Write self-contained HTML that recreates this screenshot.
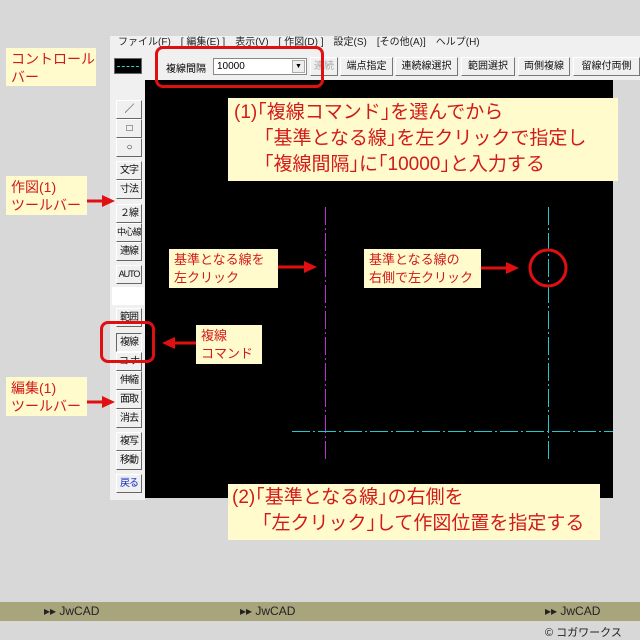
<!DOCTYPE html><html><head><meta charset="utf-8"><style>
*{margin:0;padding:0;box-sizing:border-box}
body{width:640px;height:640px;background:#d8d8d8;position:relative;overflow:hidden;font-family:"Liberation Sans","Noto Sans CJK JP",sans-serif}
.a{position:absolute}
.menu{left:110px;top:36px;width:530px;height:14px;background:#f0f0f0;font-size:10px;color:#222;line-height:14px;padding-left:8px;white-space:nowrap}
.ctl{left:110px;top:50px;width:530px;height:30px;background:#f0f0f0}
.btn{position:absolute;top:57px;height:19px;background:#f0f0f0;border:1px solid #fff;border-right-color:#777;border-bottom-color:#777;font-size:10px;line-height:17px;text-align:center;color:#111;white-space:nowrap;overflow:hidden}
.tb{position:absolute;left:116px;width:26px;height:19px;background:#f0f0f0;border:1px solid #fff;border-right-color:#666;border-bottom-color:#666;font-size:10px;line-height:17px;text-align:center;color:#111;white-space:nowrap;overflow:hidden;letter-spacing:-1px}
.note{position:absolute;background:#fffbcc;color:#d21a1a;white-space:nowrap}
.red{position:absolute;border:3px solid #e01010;border-radius:8px}
.big{font-size:19px;line-height:26px}
.ind{display:block;margin-left:30px}
.v{position:absolute;width:1px}
</style></head><body>
<div class="a menu">ファイル(F)　[ 編集(E) ]　表示(V)　[ 作図(D) ]　設定(S)　[その他(A)]　ヘルプ(H)</div>
<div class="a ctl"></div>
<div class="a" style="left:114px;top:58px;width:28px;height:16px;background:#000;border:1px solid #666"><div style="position:absolute;left:2px;right:2px;top:7px;border-top:1px dashed #3cc"></div></div>
<div class="a" style="left:166px;top:60px;font-size:10px">複線間隔</div>
<div class="a" style="left:213px;top:58px;width:94px;height:17px;background:#fff;border:1px solid #888;font-size:10px;line-height:15px;padding-left:3px">10000<span style="position:absolute;right:1px;top:1px;width:13px;height:13px;background:#eee;border:1px solid #aaa;font-size:7px;line-height:12px;text-align:center">▼</span></div>
<div class="btn" style="left:310px;width:28px;color:#aaa">連続</div>
<div class="btn" style="left:340px;width:53px">端点指定</div>
<div class="btn" style="left:395px;width:63px">連続線選択</div>
<div class="btn" style="left:461px;width:54px">範囲選択</div>
<div class="btn" style="left:518px;width:52px">両側複線</div>
<div class="btn" style="left:573px;width:67px">留線付両側</div>
<div class="a" style="left:110px;top:80px;width:35px;height:420px;background:#f0f0f0"></div>
<div class="a" style="left:145px;top:80px;width:468px;height:418px;background:#000"></div>
<div class="a" style="left:112px;top:287px;width:32px;height:18px;background:#fff"></div>
<div class="tb" style="top:100px">／</div><div class="tb" style="top:119px">□</div><div class="tb" style="top:138px">○</div>
<div class="tb" style="top:161px">文字</div><div class="tb" style="top:180px">寸法</div>
<div class="tb" style="top:204px">２線</div><div class="tb" style="top:223px;font-size:9px">中心線</div><div class="tb" style="top:242px">連線</div>
<div class="tb" style="top:265px;font-size:9px">AUTO</div>
<div class="tb" style="top:308px">範囲</div><div class="tb" style="top:333px;border-color:#666 #fff #fff #666">複線</div><div class="tb" style="top:352px">コ-ナ</div>
<div class="tb" style="top:371px">伸縮</div><div class="tb" style="top:390px">面取</div><div class="tb" style="top:409px">消去</div>
<div class="tb" style="top:432px">複写</div><div class="tb" style="top:451px">移動</div>
<div class="tb" style="top:474px;color:#1030c0">戻る</div>
<div class="v" style="left:325px;top:207px;height:255px;background:repeating-linear-gradient(to bottom,#c030d0 0 18px,transparent 18px 21px,#c030d0 21px 23px,transparent 23px 26px)"></div>
<div class="v" style="left:548px;top:207px;height:255px;background:repeating-linear-gradient(to bottom,#20c8d0 0 18px,transparent 18px 21px,#20c8d0 21px 23px,transparent 23px 26px)"></div>
<div class="a" style="left:292px;top:431px;width:321px;height:1px;background:repeating-linear-gradient(to right,#20c8d0 0 18px,transparent 18px 21px,#20c8d0 21px 23px,transparent 23px 26px)"></div>
<svg class="a" style="left:0;top:0" width="640" height="640">
<circle cx="548" cy="268" r="18" fill="none" stroke="#e01010" stroke-width="3"/>
<g stroke="#e01010" stroke-width="3" fill="#e01010">
<line x1="278" y1="267" x2="306" y2="267"/><polygon points="304,261 317,267 304,273" stroke="none"/>
<line x1="481" y1="268" x2="508" y2="268"/><polygon points="506,262 519,268 506,274" stroke="none"/>
<line x1="196" y1="343" x2="173" y2="343"/><polygon points="175,337 162,343 175,349" stroke="none"/>
<line x1="87" y1="201" x2="104" y2="201"/><polygon points="102,195 115,201 102,207" stroke="none"/>
<line x1="87" y1="402" x2="104" y2="402"/><polygon points="102,396 115,402 102,408" stroke="none"/>
</g></svg>
<div class="red" style="left:155px;top:46px;width:169px;height:42px"></div>
<div class="red" style="left:100px;top:321px;width:55px;height:42px"></div>
<div class="note big" style="left:228px;top:98px;width:390px;height:83px;padding:2px 0 0 6px">(1)｢複線コマンド｣を選んでから<span class="ind">｢基準となる線｣を左クリックで指定し</span><span class="ind">｢複線間隔｣に｢10000｣と入力する</span></div>
<div class="note big" style="left:228px;top:484px;width:372px;height:56px;padding:1px 0 0 4px">(2)｢基準となる線｣の右側を<span class="ind">｢左クリック｣して作図位置を指定する</span></div>
<div class="note" style="left:169px;top:249px;width:109px;height:39px;font-size:13px;line-height:18px;padding:2px 0 0 5px">基準となる線を<br>左クリック</div>
<div class="note" style="left:364px;top:249px;width:117px;height:39px;font-size:13px;line-height:18px;padding:2px 0 0 5px">基準となる線の<br>右側で左クリック</div>
<div class="note" style="left:196px;top:325px;width:66px;height:39px;font-size:13px;line-height:18px;padding:2px 0 0 5px">複線<br>コマンド</div>
<div class="note" style="left:6px;top:48px;width:90px;height:38px;font-size:14px;line-height:18px;padding:2px 0 0 5px">コントロール<br>バー</div>
<div class="note" style="left:6px;top:176px;width:81px;height:39px;font-size:14px;line-height:18px;padding:2px 0 0 5px">作図(1)<br>ツールバー</div>
<div class="note" style="left:6px;top:377px;width:81px;height:39px;font-size:14px;line-height:18px;padding:2px 0 0 5px">編集(1)<br>ツールバー</div>
<div class="a" style="left:0;top:602px;width:640px;height:19px;background:#a8a47c"></div>
<div class="a" style="left:44px;top:604px;font-size:12px;color:#222">▸▸ JwCAD</div>
<div class="a" style="left:240px;top:604px;font-size:12px;color:#222">▸▸ JwCAD</div>
<div class="a" style="left:545px;top:604px;font-size:12px;color:#222">▸▸ JwCAD</div>
<div class="a" style="left:545px;top:624px;font-size:11px;color:#222">© コガワークス</div>
</body></html>
